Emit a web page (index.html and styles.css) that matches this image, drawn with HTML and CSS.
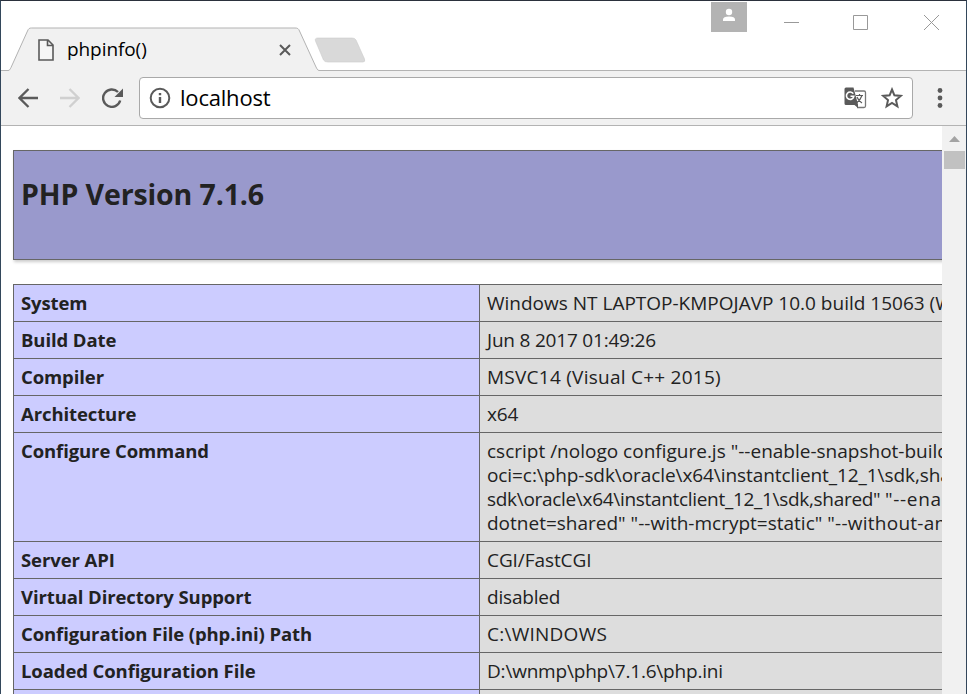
FILE: index.html
```html
<!DOCTYPE html>
<html lang="en">
<head>
<meta charset="utf-8">
<title>phpinfo()</title>
<link rel="stylesheet" href="styles.css">
</head>
<body>
<div class="window">
  <header class="titlebar">
    <div class="tabs">
      <div class="tab">
        <svg class="tab-shape" width="312" height="44" viewBox="0 0 312 44"><path d="M0 43.500C1.500 43.500 2 42.500 3 40.500L19.500 4C20.500 1.500 21.500 1 23.500 1H287C289.500 1 290.500 1.500 291.500 4L308 40C309.500 43 310 43.500 312 43.500V44H0Z" fill="#f1f1f1"/><path d="M0 43.500C1.500 43.500 2 42.500 3 40.500L19.500 4C20.500 1.500 21.500 1 23.500 1H287C289.500 1 290.500 1.500 291.500 4L308 40C309.500 43 310 43.500 312 43.500" fill="none" stroke="#b3b3b3"/></svg>
        <svg class="file" width="16" height="22" viewBox="0 0 16 22"><path d="M1 1H10L15 6V21H1ZM9.500 1V6.500H15" fill="#fff" fill-opacity=".4" stroke="#5a5a5a" stroke-width="1.600"/></svg>
        <span class="tab-title">phpinfo()</span>
        <svg class="tab-close" width="12" height="12" viewBox="0 0 12 12"><path d="M1 1L11 11M11 1L1 11" stroke="#5a5a5a" stroke-width="2"/></svg>
      </div>
      <svg class="new-tab" width="52" height="27" viewBox="0 0 52 27"><path d="M4 1H38Q41 1 42 3L50.500 22Q51.500 25 49 25H14Q10.500 25 9.500 23L1.500 4Q.500 1 4 1Z" fill="#d9d9d9" stroke="#ccc" stroke-opacity=".6"/></svg>
    </div>
    <div class="controls">
      <span class="user"><svg width="36" height="30" viewBox="0 0 36 30"><circle cx="18" cy="10" r="3.200" fill="#fff"/><path d="M12 19V17.500Q12 14.500 18 14.500T24 17.500V19Z" fill="#fff"/></svg></span>
      <svg class="min" width="15" height="16" viewBox="0 0 15 16"><path d="M0 8.500H15" stroke="#999"/></svg>
      <svg class="max" width="15" height="16" viewBox="0 0 15 16"><path d="M.500 1.500H14.500V15.500H.500Z" fill="none" stroke="#999"/></svg>
      <svg class="close" width="15" height="16" viewBox="0 0 15 16"><path d="M0 1L15 16M15 1L0 16" stroke="#999"/></svg>
    </div>
  </header>
  <nav class="toolbar">
    <svg class="back" width="20" height="20" viewBox="0 0 20 20"><path d="M20 10H2M10.500 1L1.500 10L10.500 19" fill="none" stroke="#5a5a5a" stroke-width="2.300"/></svg>
    <svg class="forward" width="20" height="20" viewBox="0 0 20 20"><path d="M0 10H18M9.500 1L18.500 10L9.500 19" fill="none" stroke="#d0d0d0" stroke-width="2.300"/></svg>
    <svg class="reload" width="22" height="20" viewBox="0 0 22 20"><path d="M18.200 12.500A8.700 8.700 0 1 1 16 4" fill="none" stroke="#5a5a5a" stroke-width="2.400"/><path d="M21 .500V9H12.500Z" fill="#5a5a5a"/></svg>
    <div class="address">
      <svg class="info" width="22" height="22" viewBox="0 0 22 22"><circle cx="11" cy="11" r="9.300" fill="none" stroke="#5a5a5a" stroke-width="2"/><path d="M11 6V8.200M11 10V16" stroke="#5a5a5a" stroke-width="2.400"/></svg>
      <span class="url">localhost</span>
      <svg class="translate" width="23" height="22" viewBox="0 0 23 22"><path d="M11 4H20Q21.500 4 21.500 5.500V19Q21.500 20.500 20 20.500H13" fill="#fff" stroke="#777" stroke-width="1.300"/><path d="M2 .500H9.500L14 17.500V21L10.500 18H2Q.500 18 .500 16.500V2Q.500 .500 2 .500Z" fill="#5a5a5a"/><path d="M9.300 6.700A3.700 3.700 0 1 0 9.800 9.300H6.500" fill="none" stroke="#fff" stroke-width="1.600"/><path d="M12 8.500H19M15.500 7V8.500M18 8.500Q16.500 13 12.500 16M13 10Q14.500 14 18 16" fill="none" stroke="#5a5a5a" stroke-width="1.200"/></svg>
      <svg class="star" width="22" height="22" viewBox="0 0 22 22"><path d="M11 2.500L13.400 8.300L19.800 8.900L15 13.100L16.400 19.300L11 16L5.600 19.300L7 13.100L2.200 8.900L8.600 8.300Z" fill="none" stroke="#5a5a5a" stroke-width="2"/></svg>
    </div>
    <svg class="menu" width="6" height="20" viewBox="0 0 6 20"><g fill="#5a5a5a"><circle cx="3" cy="2.500" r="2.400"/><circle cx="3" cy="10" r="2.400"/><circle cx="3" cy="17.500" r="2.400"/></g></svg>
  </nav>
  <div class="viewport">
    <main class="page">
      <div class="banner"><h1>PHP Version 7.1.6</h1></div>
      <table class="info-table">
        <tr><th>System</th><td>Windows NT LAPTOP-KMPOJAVP 10.0 build 15063 (W</td></tr>
        <tr><th>Build Date</th><td class="tight">Jun 8 2017 01:49:26</td></tr>
        <tr><th>Compiler</th><td class="wide">MSVC14 (Visual C++ 2015)</td></tr>
        <tr><th>Architecture</th><td class="tight">x64</td></tr>
        <tr><th>Configure Command</th><td>cscript /nologo configure.js "--enable-snapshot-build<br><span class="snug">oci=c:\php-sdk\oracle\x64\instantclient_12_1\sdk,sha</span><br><span class="tighter">sdk\oracle\x64\instantclient_12_1\sdk,shared" <span class="wider">"--ena</span></span><br>dotnet=shared" "--with-mcrypt=static" <span class="wide">"--without-an</span></td></tr>
        <tr><th>Server API</th><td class="snug">CGI/FastCGI</td></tr>
        <tr><th>Virtual Directory Support</th><td class="tight">disabled</td></tr>
        <tr><th>Configuration File (php.ini) Path</th><td class="wide">C:\WINDOWS</td></tr>
        <tr><th>Loaded Configuration File</th><td class="tight">D:\wnmp\php\7.1.6\php.ini</td></tr>
        <tr><th>&nbsp;</th><td>&nbsp;</td></tr>
      </table>
    </main>
    <div class="scrollbar">
      <svg width="11" height="6" viewBox="0 0 11 6"><path d="M0 6L5.500 0L11 6Z" fill="#a3a3a3"/></svg>
      <div class="thumb"></div>
    </div>
  </div>
</div>
</body>
</html>
```
FILE: styles.css
```css
* { box-sizing: border-box; }
html, body { height: 100%; }
body { margin: 0; overflow: hidden; background: #fff; color: #222; font: 19px/24px "Open Sans", "Noto Sans", sans-serif; }
svg { display: block; flex: none; }
.window { height: 100vh; display: flex; flex-direction: column; border: 1px solid #33475b; border-top-color: #2b313d; border-bottom: 0; overflow: hidden; }

.titlebar { height: 70px; flex: none; display: flex; justify-content: space-between; border-bottom: 1px solid #b3b3b3; }
.tabs { display: flex; align-items: flex-end; padding-left: 7px; }
.tab { position: relative; width: 312px; height: 44px; margin-bottom: -1px; display: flex; align-items: center; padding: 2px 29px 0 30px; }
.tab-shape { position: absolute; left: 0; top: 0; }
.file, .tab-title, .tab-close { position: relative; }
.tab-title { margin-left: 13px; padding-bottom: 2px; flex: 1; color: #000; letter-spacing: -.08px; }
.new-tab { margin: 0 0 6px -6px; }
.controls { display: flex; padding: 1px 27px 0 0; }
.user { width: 36px; height: 30px; background: #b3b3b3; }
.controls .min { margin: 12px 0 0 37px; }
.controls .max { margin: 12px 0 0 54px; }
.controls .close { margin: 12px 0 0 56px; }

.toolbar { height: 55px; flex: none; display: flex; align-items: center; background: #f1f1f1; border-bottom: 1px solid #b3b3b3; padding: 0 23px 0 17px; }
.forward { margin-left: 22px; }
.reload { margin-left: 22px; }
.address { margin-left: 15px; flex: 1; height: 42px; display: flex; align-items: center; background: #fff; border: 1px solid #a9a9a9; border-radius: 4px; padding: 0 9px 0 9px; }
.url { margin-left: 9px; padding-bottom: 2px; flex: 1; color: #000; font-size: 22px; letter-spacing: -.2px; }
.star { margin-left: 14px; }
.menu { margin-left: 24px; }

.viewport { flex: 1; min-height: 0; display: flex; }
.page { flex: 1; min-width: 0; overflow: hidden; padding: 24px 0 0 12px; }
.banner { width: 1400px; height: 110px; background: #99c; border: 1px solid #666; box-shadow: 1px 2px 3px #ccc; padding: 28px 7px 0; }
h1 { margin: 0; font-size: 28.5px; line-height: 30px; font-weight: 700; letter-spacing: -.12px; }
.info-table { width: 1400px; margin-top: 24px; border-collapse: collapse; table-layout: fixed; }
th, td { border: 1px solid #666; padding: 6px 7px; vertical-align: top; text-align: left; white-space: nowrap; }
th { width: 466px; background: #ccf; font-size: 18.5px; font-weight: 700; letter-spacing: -.1px; }
td { background: #ddd; }
.snug { letter-spacing: -.08px; }
.tight { letter-spacing: -.2px; }
.tighter { letter-spacing: -.31px; }
.wide { letter-spacing: .25px; }
.wider { letter-spacing: .7px; }

.scrollbar { width: 24px; flex: none; background: #f1f1f1; display: flex; flex-direction: column; align-items: center; padding-top: 10px; }
.thumb { width: 21px; height: 18px; margin-top: 9px; background: #c1c1c1; }
```
